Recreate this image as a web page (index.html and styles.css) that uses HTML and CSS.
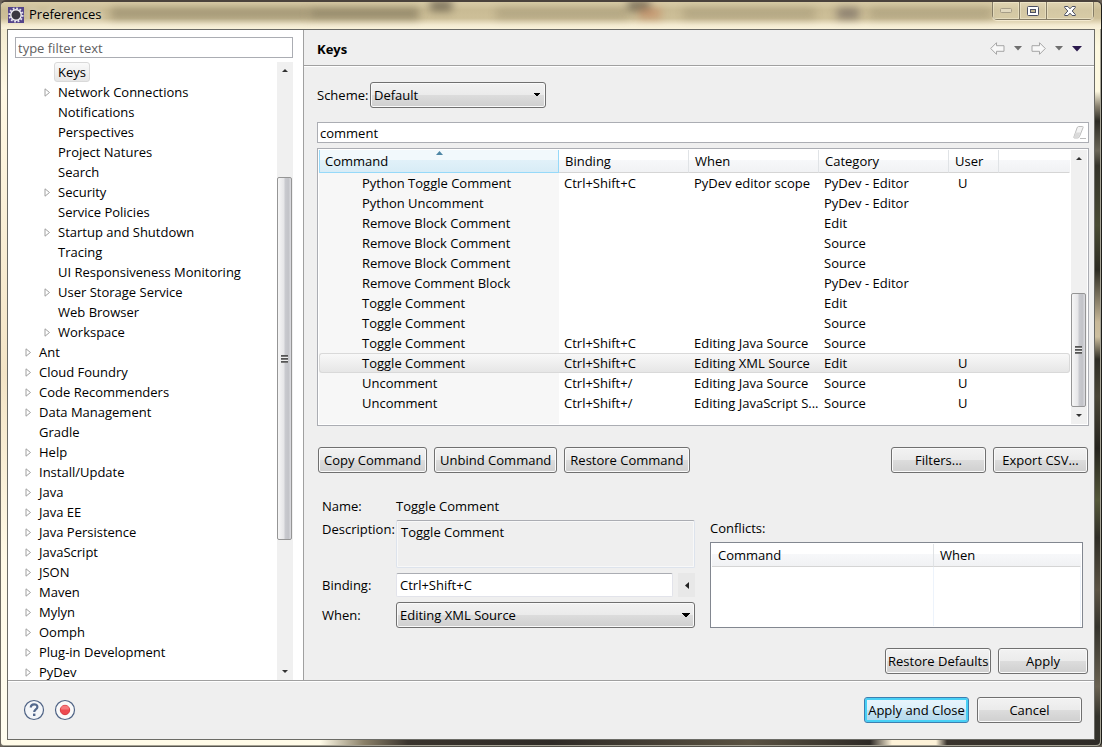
FILE: index.html
```html
<!DOCTYPE html>
<html lang="en">
<head>
    <meta charset="UTF-8">
    <title>Preferences</title>
    <link rel="stylesheet" href="styles.css">
</head>
<body>
<div class="window">
    <div class="titlebar">
        <svg class="app-icon" width="16" height="16" viewBox="0 0 16 16">
            <rect width="16" height="16" fill="#54448a"/>
            <circle cx="8" cy="8" r="6.6" fill="none" stroke="#e4e2ea" stroke-width="2" stroke-dasharray="1.8 1.65"/>
            <circle cx="8" cy="8" r="5.2" fill="#3a3842" stroke="#f1f0f4" stroke-width="1.4"/>
        </svg>
        <span class="caption">Preferences</span>
        <div class="ghosts">
            <i class="ghost g1"></i>
            <i class="ghost g2"></i>
            <i class="ghost g3"></i>
            <i class="ghost g4"></i>
            <i class="ghost g5"></i>
            <i class="ghost g6"></i>
            <i class="ghost g7"></i>
            <i class="ghost g8"></i>
            <i class="ghost g9"></i>
        </div>
        <div class="win-buttons">
            <button class="win-btn" aria-label="Minimize">
                <svg width="12" height="5" viewBox="0 0 12 5"><rect x=".5" y=".5" width="11" height="4" rx="1" fill="#e2d9bf" stroke="#a69d87"/></svg>
            </button>
            <button class="win-btn" aria-label="Maximize">
                <svg width="12" height="10" viewBox="0 0 12 10"><rect x=".5" y=".5" width="11" height="9" rx="1" fill="#fff" stroke="#4b4f63"/><rect x="3.5" y="3.5" width="5" height="3" fill="#c3b68f" stroke="#4b4f63"/></svg>
            </button>
            <button class="win-btn win-close" aria-label="Close">
                <svg width="12" height="10" viewBox="0 0 12 10"><path d="M.7.5h3.2L6 2.8 8.1.5h3.2v1L8.2 5l3.1 3.5v1H8.1L6 7.2 3.9 9.5H.7v-1L3.8 5 .7 1.5z" fill="#fff" stroke="#4b4f63"/></svg>
            </button>
        </div>
    </div>

    <div class="client">
        <div class="main">
            <div class="sidebar">
                <input class="field" type="text" placeholder="type filter text" aria-label="Filter">
                <div class="tree-wrap">
                    <ul class="tree" id="tree"></ul>
                    <div class="scrollbar">
                        <span class="arrow up"></span>
                        <div class="track track-tree"><div class="thumb"><i class="grip"></i></div></div>
                        <span class="arrow down"></span>
                    </div>
                </div>
            </div>

            <div class="page">
                <div class="page-head">
                    <h1>Keys</h1>
                    <div class="nav">
                        <button class="nav-btn" aria-label="Back">
                            <svg width="15" height="13" viewBox="0 0 15 13"><path d="M.7 6.5 6.5.7v3H14v5.6H6.5v3z" fill="#f8f8f8" stroke="#a5a5a5"/></svg>
                        </button>
                        <button class="nav-btn" aria-label="Back history"><svg width="8" height="5" viewBox="0 0 8 5"><path d="M0 0h8L4 4.5z" fill="#6f6f6f"/></svg></button>
                        <button class="nav-btn" aria-label="Forward">
                            <svg width="15" height="13" viewBox="0 0 15 13"><path d="M14.3 6.5 8.5.7v3H1v5.6h7.5v3z" fill="#f8f8f8" stroke="#a5a5a5"/></svg>
                        </button>
                        <button class="nav-btn" aria-label="Forward history"><svg width="8" height="5" viewBox="0 0 8 5"><path d="M0 0h8L4 4.5z" fill="#6f6f6f"/></svg></button>
                        <button class="nav-btn" aria-label="Menu"><svg width="10" height="6" viewBox="0 0 10 6"><path d="M0 0h10L5 5.5z" fill="#2b1a4d"/></svg></button>
                    </div>
                </div>

                <div class="page-body">
                    <div class="scheme">
                        <label for="scheme">Scheme:</label>
                        <select class="combo" id="scheme"><option>Default</option></select>
                    </div>

                    <div class="search">
                        <input class="field" type="text" value="comment" aria-label="Search commands">
                        <svg class="eraser" width="14" height="13" viewBox="0 0 14 13">
                            <path d="M5.5.5h4q1 0 .6 1L6.5 10.500q-.5 1.500-2 1.500h-3q-1 0-.6-1L4 2q.5-1.500 1.500-1.500z" fill="#f3f3f3" stroke="#bdbdbd"/>
                            <path d="M2.5 6.500h4.800L5.500 11.500H1z" fill="#dadada"/>
                            <path d="M7 12.500h6" stroke="#bdbdbd"/>
                        </svg>
                    </div>

                    <div class="grid-box keys-box">
                        <div class="grid-scroll">
                            <table class="grid keys">
                                <colgroup>
                                    <col class="c-command"><col class="c-mid"><col class="c-mid"><col class="c-mid"><col class="c-user"><col>
                                </colgroup>
                                <thead>
                                    <tr>
                                        <th class="sorted">Command<svg class="sort" width="7" height="4" viewBox="0 0 7 4"><path d="M0 4 3.5 0 7 4z" fill="#4f87a5"/></svg></th>
                                        <th>Binding</th><th>When</th><th>Category</th><th>User</th><th></th>
                                    </tr>
                                </thead>
                                <tbody id="keys"></tbody>
                            </table>
                        </div>
                        <div class="scrollbar">
                            <span class="arrow up"></span>
                            <div class="track track-keys"><div class="thumb"><i class="grip"></i></div></div>
                            <span class="arrow down"></span>
                        </div>
                    </div>

                    <div class="actions">
                        <button class="btn">Copy Command</button>
                        <button class="btn">Unbind Command</button>
                        <button class="btn">Restore Command</button>
                        <span class="spacer"></span>
                        <button class="btn w95">Filters...</button>
                        <button class="btn w95">Export CSV...</button>
                    </div>

                    <div class="details">
                        <div class="form">
                            <span>Name:</span>
                            <span>Toggle Comment</span>
                            <label class="top" for="desc">Description:</label>
                            <textarea id="desc" class="desc" readonly>Toggle Comment</textarea>
                            <label for="binding">Binding:</label>
                            <div class="binding">
                                <input id="binding" class="soft" type="text" value="Ctrl+Shift+C">
                                <button class="mini" aria-label="Special keys"><svg width="4" height="7" viewBox="0 0 4 7"><path d="M4 0v7L0 3.5z" fill="#222"/></svg></button>
                            </div>
                            <label for="when">When:</label>
                            <select class="combo" id="when"><option>Editing XML Source</option></select>
                        </div>
                        <div class="conflicts">
                            <span>Conflicts:</span>
                            <div class="grid-box conflict-box">
                                <table class="grid conflict">
                                    <thead><tr><th>Command</th><th>When</th></tr></thead>
                                    <tbody><tr><td></td><td></td></tr></tbody>
                                </table>
                            </div>
                        </div>
                    </div>

                    <div class="page-buttons">
                        <button class="btn w106">Restore Defaults</button>
                        <button class="btn w90">Apply</button>
                    </div>
                </div>
            </div>
        </div>

        <div class="footer">
            <button class="round" aria-label="Help">
                <svg width="22" height="22" viewBox="0 0 22 22">
                    <circle cx="11" cy="11" r="9.5" fill="#f4f6f9" stroke="#4f6385" stroke-width="1.2"/>
                    <path d="M7.8 8.600c0-4.400 6.600-4.200 6.600-.6 0 2.400-3.200 2.500-3.200 5" fill="none" stroke="#53688c" stroke-width="2.2"/>
                    <rect x="10" y="14.6" width="2.4" height="2.4" fill="#53688c"/>
                </svg>
            </button>
            <button class="round" aria-label="Record">
                <svg width="22" height="22" viewBox="0 0 22 22">
                    <circle cx="11" cy="11" r="9.5" fill="#fafafa" stroke="#4f6385" stroke-width="1.2"/>
                    <circle cx="11" cy="11" r="4.7" fill="#ee4a50" stroke="#d93a40"/>
                    <path d="M7 10.500a4 4 0 0 1 8 0z" fill="#f7797c"/>
                </svg>
            </button>
            <span class="spacer"></span>
            <button class="btn primary w105">Apply and Close</button>
            <button class="btn w105">Cancel</button>
        </div>
    </div>
</div>
<script src="main.js"></script>
</body>
</html>
```
FILE: styles.css
```css
* {
    margin: 0;
    padding: 0;
    box-sizing: border-box;
}

body, button, input, select, textarea {
    font: 13px/20px "Open Sans", "Noto Sans", sans-serif;
    color: #000;
}

body {
    background: #6a6258;
}

svg {
    display: block;
    flex: none;
}

.spacer {
    flex: 1;
}

/* window frame */
.window {
    height: 100vh;
    display: flex;
    flex-direction: column;
    padding: 0 6px 6px;
    border-top: 2px solid #4a423c;
    border-left: 1px solid #6c6860;
    border-right: 1px solid #1c1c18;
    border-bottom: 1px solid #55534c;
    border-radius: 6px 6px 5px 5px;
    box-shadow: inset -1px -1px #a5a294;
    background:
        linear-gradient(90deg, #fffbe8 0, #fffbe8 29%, #8a8068 33%, #3a342d 37%, #2e2a26 50%, #5a5242 68%, #2e2a26 79%, #fdf2d8 81%, #fdf2d8 85%, #3a342d 86%, #2e2b27 100%) 0 100% / 100% 6px no-repeat,
        linear-gradient(#e8dfc0 0, #fdf8e0 6%, #fdf8e0 12%, #8a8270 14%, #2c2b24 16%, #6a6658 20%, #34332a 22%, #4a4c34 30%, #2c2b22 36%, #c8b898 43%, #cdbf9f 45%, #2f2e26 48%, #4a4636 53%, #25241e 60%, #55583a 67%, #2f2d26 72%, #5c5444 79%, #34332c 84%, #6a6252 92%, #34332c 96%) 100% 0 / 6px 100% no-repeat,
        linear-gradient(#efe6c8 0, #fff8e4 12%, #f3e4c6 50%, #fff9e6 75%, #fffdf0 100%);
}

.titlebar {
    display: flex;
    align-items: flex-start;
    position: relative;
    height: 27px;
    margin: 0 -6px;
    padding-left: 7px;
    background: linear-gradient(#d9cca8 0, #c9bb94 30%, #cdbf98 60%, #f3ead0 85%, #faf3dc 100%);
    border-radius: 5px 5px 0 0;
    overflow: hidden;
}

.app-icon {
    margin-top: 5px;
}

.caption {
    margin: 2px 0 0 5px;
    position: relative;
    z-index: 1;
    text-shadow: 0 0 6px #fff;
}

/* what shows through the glass */
.ghost {
    position: absolute;
    top: 6px;
    height: 11px;
    filter: blur(4px);
    background: #7c7257;
    opacity: .5;
}

.g1 { left: 10%; width: 18%; }
.g2 { left: 39%; width: 2%; top: -2px; background: #2a241c; }
.g3 { left: 45%; width: 12%; opacity: .3; }
.g4 { left: 57%; width: 2%; top: -2px; background: #2a241c; }
.g5 { left: 58%; width: 2%; background: #c47850; }
.g6 { left: 62%; width: 12%; opacity: .3; }
.g7 { left: 76%; width: 2%; background: #4a4048; }
.g8 { left: 79%; width: 11%; opacity: .3; }
.g9 { left: 28%; width: 10%; opacity: .7; }

.win-buttons {
    display: flex;
    margin: 0 7px 0 auto;
    position: relative;
    border: 1px solid #857c66;
    border-top: 0;
    border-radius: 0 0 5px 5px;
    box-shadow: 0 1px 1px #f6edd4;
}

.win-btn {
    display: flex;
    justify-content: center;
    align-items: center;
    width: 27px;
    height: 17px;
    border: 0;
    border-right: 1px solid #857c66;
    background: rgba(255, 250, 225, .2);
    box-shadow: inset 0 0 0 1px rgba(255, 250, 225, .4);
}

.win-close {
    width: 46px;
    border-right: 0;
}

.client {
    flex: 1;
    min-height: 0;
    display: flex;
    flex-direction: column;
    border: 1px solid #6b6b66;
    background: #efefef;
}

.main {
    flex: 1;
    min-height: 0;
    display: flex;
}

/* tree */
.sidebar {
    display: flex;
    flex-direction: column;
    width: 296px;
    flex: none;
    padding: 7px 10px 0 7px;
    background: #fff;
    border-right: 1px solid #a0a0a0;
}

.field {
    width: 100%;
    height: 21px;
    padding: 0 2px;
    border: 1px solid #abadb3;
    background: #fff;
    flex: none;
}

.field::placeholder {
    color: #606060;
}

.tree-wrap {
    flex: 1;
    min-height: 0;
    display: flex;
    margin-top: 4px;
}

.tree {
    flex: 1;
    overflow: hidden;
    list-style: none;
}

.tree li {
    display: flex;
    align-items: center;
    height: 20px;
    padding-left: 10px;
    white-space: nowrap;
}

.tree li.sub {
    padding-left: 29px;
}

.tree svg {
    margin-right: 3px;
}

.tree .label {
    padding: 0 4px;
}

.tree .leaf {
    margin-left: 10px;
}

.tree .selected {
    padding: 0 3px;
    line-height: 18px;
    border: 1px solid #d9d9d9;
    border-radius: 3px;
    background: linear-gradient(#fafafa, #e6e6e6);
}

/* scrollbars */
.scrollbar {
    display: flex;
    flex-direction: column;
    width: 16px;
    flex: none;
    background: #f0f0f0;
}

.arrow {
    height: 17px;
    display: flex;
    justify-content: center;
    align-items: center;
}

.arrow::before {
    content: "";
    border: 3px solid transparent;
}

.up::before {
    border-top: 0;
    border-bottom-color: #333;
}

.down::before {
    border-bottom: 0;
    border-top-color: #333;
}

.track {
    flex: 1;
    display: flex;
    flex-direction: column;
}

.track-tree::before {
    content: "";
    flex: 98;
}

.track-tree::after {
    content: "";
    flex: 123;
}

.track-tree .thumb {
    flex: 362;
}

.track-keys::before {
    content: "";
    flex: 127;
}

.track-keys .thumb {
    flex: 113;
}

.thumb {
    display: flex;
    justify-content: center;
    align-items: center;
    width: 15px;
    border: 1px solid #959595;
    border-radius: 2px;
    background: linear-gradient(90deg, #f6f6f6 0, #e6e6e8 45%, #c9cacf 55%, #c2c3c8 80%, #dcdce0 100%);
}

.grip {
    width: 7px;
    height: 8px;
    background: repeating-linear-gradient(#555 0, #555 1px, #999 2px, #eee 2px, #eee 3px);
}

/* page */
.page {
    flex: 1;
    min-width: 0;
    display: flex;
    flex-direction: column;
}

.page-head {
    display: flex;
    align-items: center;
    justify-content: space-between;
    height: 36px;
    padding: 2px 12px 0 13px;
    border-bottom: 1px solid #a0a0a0;
    box-shadow: 0 1px #fff;
}

.page-head h1 {
    font-size: 13px;
}

.nav {
    display: flex;
    align-items: center;
    gap: 9px;
}

.nav-btn {
    border: 0;
    background: none;
}

.page-body {
    flex: 1;
    display: flex;
    flex-direction: column;
    padding: 16px 5px 6px 13px;
}

.scheme {
    display: flex;
    align-items: center;
}

.scheme label {
    flex: 0 0 53px;
}

.combo {
    appearance: none;
    height: 26px;
    padding: 0 20px 0 3px;
    border: 1px solid #707070;
    border-radius: 3px;
    box-shadow: inset 0 0 0 1px #fafafa;
    /* two small triangles make the arrow */
    background:
        linear-gradient(45deg, transparent 50%, #000 0) right 8px center / 4px 4px no-repeat,
        linear-gradient(-45deg, transparent 50%, #000 0) right 4px center / 4px 4px no-repeat,
        linear-gradient(#f2f2f2 0, #ebebeb 48%, #dcdcdc 52%, #cfcfcf 100%);
}

#scheme {
    width: 176px;
}

.search {
    position: relative;
    margin-top: 14px;
}

.search .field {
    display: block;
}

.eraser {
    position: absolute;
    right: 2px;
    top: 4px;
}

.grid-box {
    border: 1px solid #abadb3;
    background: #fff;
    padding: 1px;
}

.keys-box {
    flex: 1;
    display: flex;
    margin-top: 5px;
}

.grid-scroll {
    flex: 1;
    padding-right: 1px;
    background: linear-gradient(#f7f7f7, #f7f7f7) 0 0 / 240px 100% no-repeat;
}

.grid {
    width: 100%;
    table-layout: fixed;
    border-collapse: separate;
    border-spacing: 0;
}

.grid th {
    position: relative;
    height: 23px;
    padding: 0 6px;
    font-weight: normal;
    text-align: left;
    border-right: 1px solid #e0e3e6;
    border-bottom: 1px solid #d5d5d5;
    background: linear-gradient(#fff 0, #fff 45%, #f7f8fa 46%, #f1f2f4 100%);
}

.grid th:last-child {
    border-right-color: transparent;
}

.grid .sorted {
    padding-left: 5px;
    border: 1px solid #96d9f9;
    border-top: 0;
    background: linear-gradient(#f2f9fc 0, #f2f9fc 45%, #e1f1f9 46%, #d8ecf6 100%);
}

.sort {
    position: absolute;
    top: 1px;
    left: calc(50% - 3px);
}

.c-command {
    width: 240px;
}

.c-mid {
    width: 130px;
}

.c-user {
    width: 50px;
}

.keys td {
    height: 20px;
    line-height: 18px;
    padding: 0 0 0 5px;
    border: solid transparent;
    border-width: 1px 0;
    white-space: nowrap;
    overflow: hidden;
}

.keys td:first-child {
    padding-left: 43px;
}

.keys td:nth-child(5) {
    padding-left: 9px;
}

.keys .selected td {
    border-color: #d9d9d9;
    background: linear-gradient(#f8f8f8, #e6e6e6);
}

.keys .selected td:last-child {
    border-right: 1px solid #d9d9d9;
    border-radius: 0 3px 3px 0;
}

.keys .selected td:first-child {
    border-left: 1px solid #d9d9d9;
    border-radius: 3px 0 0 3px;
    padding-left: 42px;
}

/* buttons */
.actions, .page-buttons {
    display: flex;
    gap: 7px;
}

.actions {
    margin: 21px 1px 24px;
}

.page-buttons {
    justify-content: flex-end;
    margin: 20px 1px 0;
}

.btn {
    height: 26px;
    padding: 0 5px;
    white-space: nowrap;
    border: 1px solid #707070;
    border-radius: 3px;
    box-shadow: inset 0 0 0 1px #fafafa;
    background: linear-gradient(#f2f2f2 0, #ebebeb 48%, #dcdcdc 52%, #cfcfcf 100%);
}

.page-buttons .btn, .footer .btn {
    padding: 0 2px;
}

.w90 {
    width: 90px;
}

.w95 {
    width: 95px;
}

.w105 {
    width: 105px;
}

.w106 {
    width: 106px;
}

.btn.primary {
    border-color: #3c7fb1;
    box-shadow: inset 0 0 0 2px #48d0f5;
    background: linear-gradient(#eaf6fd 0, #dcf0fa 48%, #c4e2f2 52%, #b4d8ec 100%);
}

/* details */
.details {
    display: grid;
    grid-template-columns: 1fr 1fr;
    gap: 15px;
    padding: 0 6px 0 5px;
}

.form {
    display: grid;
    grid-template-columns: 74px 1fr;
    grid-template-rows: 18px 48px 24px 26px;
    row-gap: 5px;
    align-items: center;
}

.form .top {
    align-self: start;
    line-height: 18px;
}

.desc {
    width: 100%;
    height: 48px;
    padding: 1px 4px;
    resize: none;
    display: block;
    border: 1px solid #dde3ec;
    border-top-color: #abadb3;
    border-radius: 2px;
    background: #efefef;
    box-shadow: inset 0 0 0 1px #f8f8f8;
}

.binding {
    display: flex;
    gap: 5px;
}

.soft {
    flex: 1;
    min-width: 0;
    height: 24px;
    padding: 0 3px;
    border: 1px solid #e2e3ea;
    border-top-color: #abadb3;
    border-radius: 2px;
    background: #fff;
}

.mini {
    display: flex;
    align-items: center;
    justify-content: center;
    width: 17px;
    border: 0;
    background: #e8e8e8;
}

.conflicts {
    display: flex;
    flex-direction: column;
    padding-top: 21px;
}

.conflict-box {
    flex: 1;
    display: flex;
    margin-top: 4px;
    border-color: #828790;
}

.conflict th:first-child {
    width: 222px;
}

.conflict td {
    border-right: 1px solid #edf3fb;
}

.conflict tbody {
    height: 100%;
}

/* footer */
.footer {
    display: flex;
    align-items: center;
    height: 59px;
    padding: 0 12px 1px 15px;
    gap: 8px;
    border-top: 1px solid #a0a0a0;
    box-shadow: inset 0 1px #fff;
}

.round {
    border: 0;
    background: none;
    margin-right: 1px;
}
```
FILE: main.js
```js
// level, has children, label
var nodes = [
    [2, 0, 'Keys'], [2, 1, 'Network Connections'], [2, 0, 'Notifications'], [2, 0, 'Perspectives'],
    [2, 0, 'Project Natures'], [2, 0, 'Search'], [2, 1, 'Security'], [2, 0, 'Service Policies'],
    [2, 1, 'Startup and Shutdown'], [2, 0, 'Tracing'], [2, 0, 'UI Responsiveness Monitoring'],
    [2, 1, 'User Storage Service'], [2, 0, 'Web Browser'], [2, 1, 'Workspace'],
    [1, 1, 'Ant'], [1, 1, 'Cloud Foundry'], [1, 1, 'Code Recommenders'], [1, 1, 'Data Management'],
    [1, 0, 'Gradle'], [1, 1, 'Help'], [1, 1, 'Install/Update'], [1, 1, 'Java'], [1, 1, 'Java EE'],
    [1, 1, 'Java Persistence'], [1, 1, 'JavaScript'], [1, 1, 'JSON'], [1, 1, 'Maven'], [1, 1, 'Mylyn'],
    [1, 1, 'Oomph'], [1, 1, 'Plug-in Development'], [1, 1, 'PyDev']
];
var twisty = '<svg width="7" height="9" viewBox="0 0 7 9"><path d="M1 .8v7.4L5.5 4.5z" fill="#fff" stroke="#a0a0a0"/></svg>';

document.getElementById('tree').innerHTML = nodes.map(function (n) {
    var cls = 'label' + (n[1] ? '' : ' leaf') + (n[2] === 'Keys' ? ' selected' : '');
    return '<li class="' + (n[0] === 2 ? 'sub' : '') + '">' + (n[1] ? twisty : '') +
        '<span class="' + cls + '">' + n[2] + '</span></li>';
}).join('');

var rows = [
    ['Python Toggle Comment', 'Ctrl+Shift+C', 'PyDev editor scope', 'PyDev - Editor', 'U'],
    ['Python Uncomment', '', '', 'PyDev - Editor', ''],
    ['Remove Block Comment', '', '', 'Edit', ''],
    ['Remove Block Comment', '', '', 'Source', ''],
    ['Remove Block Comment', '', '', 'Source', ''],
    ['Remove Comment Block', '', '', 'PyDev - Editor', ''],
    ['Toggle Comment', '', '', 'Edit', ''],
    ['Toggle Comment', '', '', 'Source', ''],
    ['Toggle Comment', 'Ctrl+Shift+C', 'Editing Java Source', 'Source', ''],
    ['Toggle Comment', 'Ctrl+Shift+C', 'Editing XML Source', 'Edit', 'U'],
    ['Uncomment', 'Ctrl+Shift+/', 'Editing Java Source', 'Source', 'U'],
    ['Uncomment', 'Ctrl+Shift+/', 'Editing JavaScript S...', 'Source', 'U']
];

document.getElementById('keys').innerHTML = rows.map(function (r, i) {
    return '<tr' + (i === 9 ? ' class="selected"' : '') + '><td>' + r.join('</td><td>') + '</td><td></td></tr>';
}).join('');
```
